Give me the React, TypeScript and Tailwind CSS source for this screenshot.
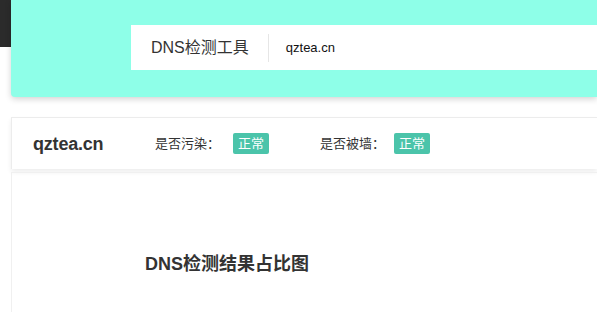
import React from "react";

export default function App() {
  const font = { fontFamily: '"Liberation Sans", "Noto Sans CJK SC", sans-serif' };
  return (
    <div
      className="relative w-[597px] h-[312px] overflow-hidden bg-white text-[#333]"
      style={font}
    >
      <div className="absolute left-0 top-0 w-[11px] h-[47px] bg-[#2b2b2b]" />
      <div className="relative flex flex-col pl-[11px]">
        <div className="h-[97px] bg-[#8effe8] rounded-bl-[4px] shadow-[0_2px_6px_rgba(0,0,0,0.18)] pt-[25px] pl-[120px]">
          <div className="h-[45px] bg-white flex items-center">
            <span className="pl-[20px] text-[16px] leading-none text-[#333]">DNS检测工具</span>
            <span className="ml-[19px] w-px h-[28px] bg-[#e6e6e6]" />
            <span className="ml-[17px] text-[13px] leading-none text-[#111]">qztea.cn</span>
          </div>
        </div>
        <div className="mt-[20px] h-[52px] border-t border-l border-[#ececec] bg-white shadow-[0_3px_5px_rgba(0,0,0,0.07)] flex items-center">
          <span className="pl-[21px] w-[143px] text-[18px] font-bold leading-none text-[#333] tracking-[-0.2px]">qztea.cn</span>
          <span className="text-[13px] leading-none">是否污染：</span>
          <span className="ml-[13px] w-[36px] h-[21px] rounded-[2px] bg-[#4bc4aa] text-white text-[13px] flex items-center justify-center">正常</span>
          <span className="ml-[51px] text-[13px] leading-none">是否被墙：</span>
          <span className="ml-[9px] w-[36px] h-[21px] rounded-[2px] bg-[#4bc4aa] text-white text-[13px] flex items-center justify-center">正常</span>
        </div>
        <div className="mt-[3px] h-[200px] border-l border-t border-[#f0f0f0] pt-[82px] pl-[133px]">
          <h2 className="text-[18px] font-bold leading-none text-[#333]">DNS检测结果占比图</h2>
        </div>
      </div>
    </div>
  );
}
